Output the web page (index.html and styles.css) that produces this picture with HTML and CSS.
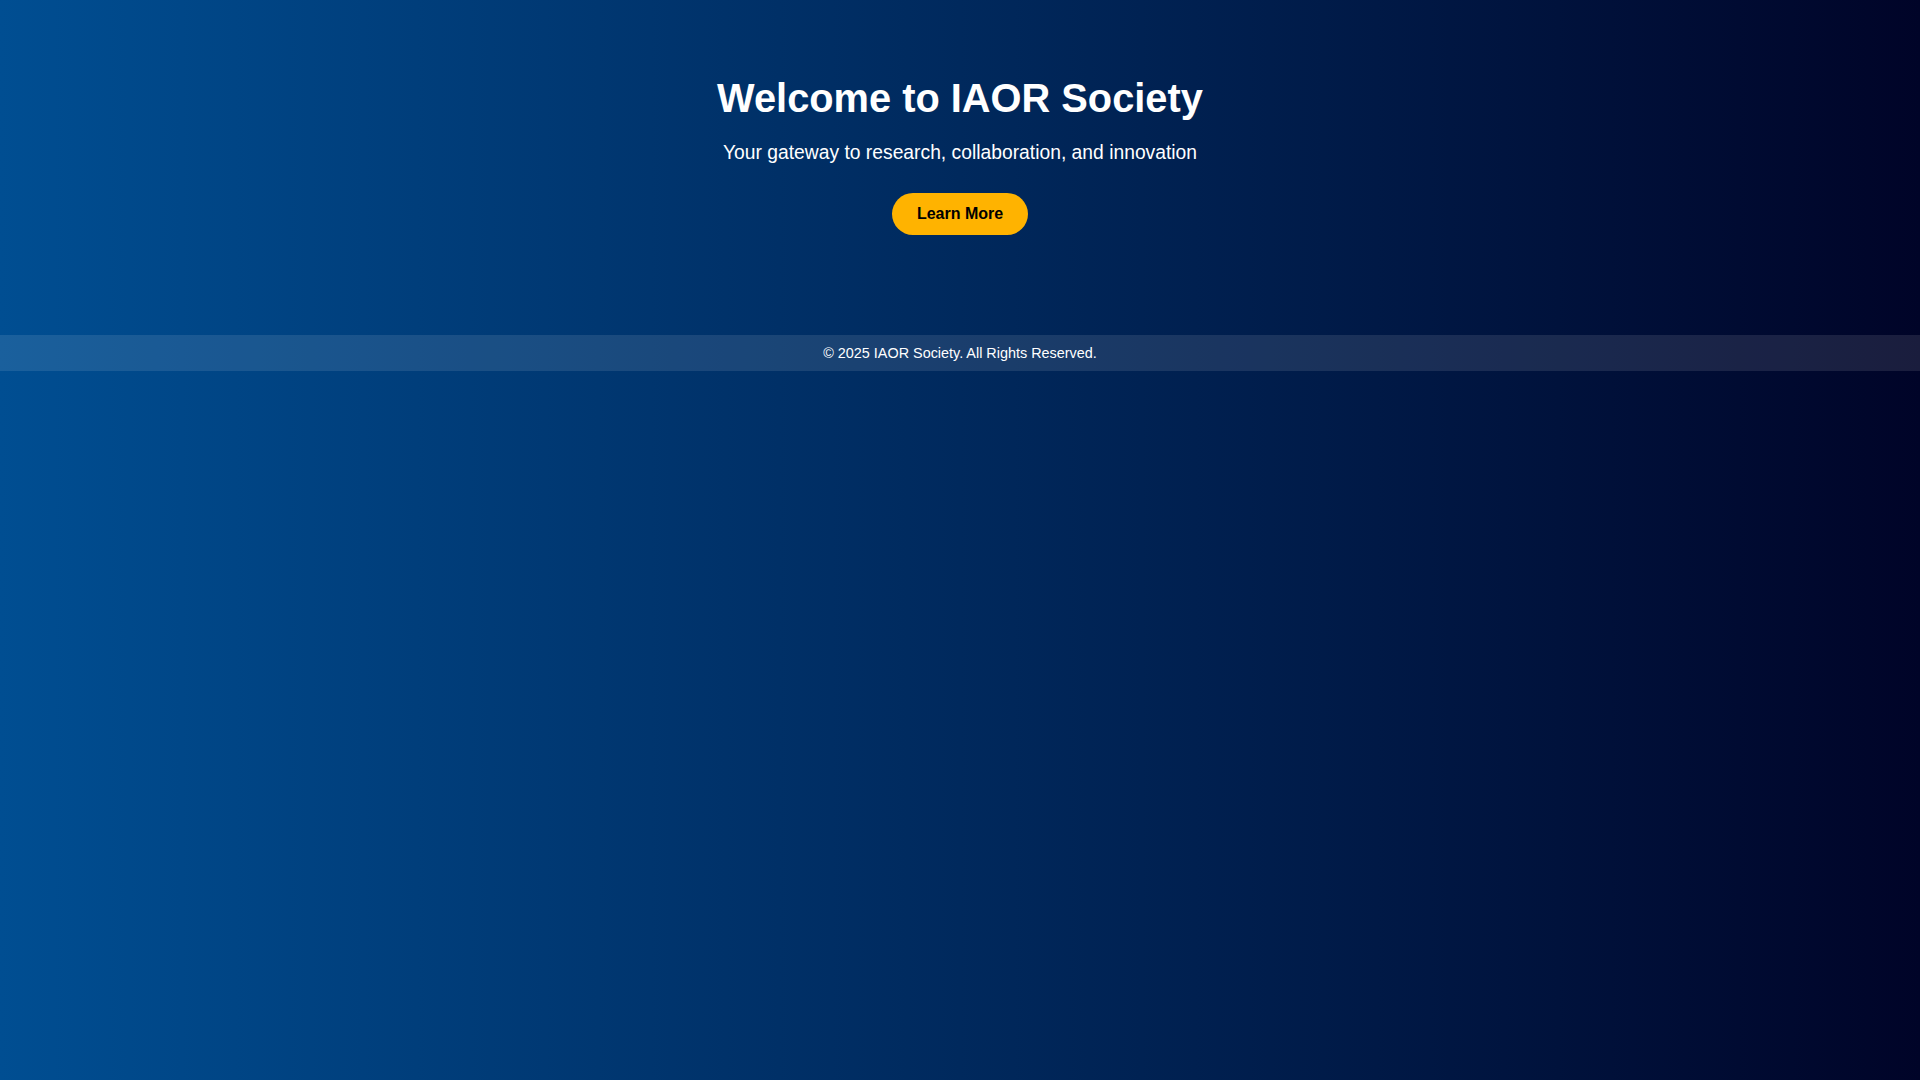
FILE: index.html
```html
<!DOCTYPE html>
<html lang="en">
<head>
<meta charset="utf-8">
<title>IAOR Society</title>
<link rel="stylesheet" href="styles.css">
</head>
<body>
<header class="hero">
  <h1 class="hero-title">Welcome to IAOR Society</h1>
  <p class="hero-subtitle">Your gateway to research, collaboration, and innovation</p>
  <a class="hero-button" href="#">Learn More</a>
</header>
<footer class="site-footer">
  <p class="footer-text">&copy; 2025 IAOR Society. All Rights Reserved.</p>
</footer>
</body>
</html>
```

FILE: styles.css
```css
html, body {
  margin: 0;
  padding: 0;
  min-height: 100%;
}
body {
  min-height: 100vh;
  font-family: "Liberation Sans", Arial, sans-serif;
  color: #ffffff;
  background: linear-gradient(to right, #004e92, #000428);
}
.hero {
  display: flex;
  flex-direction: column;
  align-items: center;
  text-align: center;
  padding: 75px 20px 100px;
}
.hero-title {
  margin: 0;
  font-size: 39.8px;
  font-weight: bold;
  line-height: 46px;
}
.hero-subtitle {
  margin: 21px 0 0;
  font-size: 19.3px;
  line-height: 22px;
}
.hero-button {
  margin-top: 29px;
  display: inline-block;
  padding: 12px 25px;
  background: #ffb300;
  color: #000000;
  font-size: 16px;
  font-weight: bold;
  line-height: 18px;
  border-radius: 999px;
  text-decoration: none;
}
.site-footer {
  background: rgba(255, 255, 255, 0.1);
  text-align: center;
  padding: 10px 0;
}
.footer-text {
  margin: 0;
  font-size: 14.4px;
  line-height: 16px;
}
```
